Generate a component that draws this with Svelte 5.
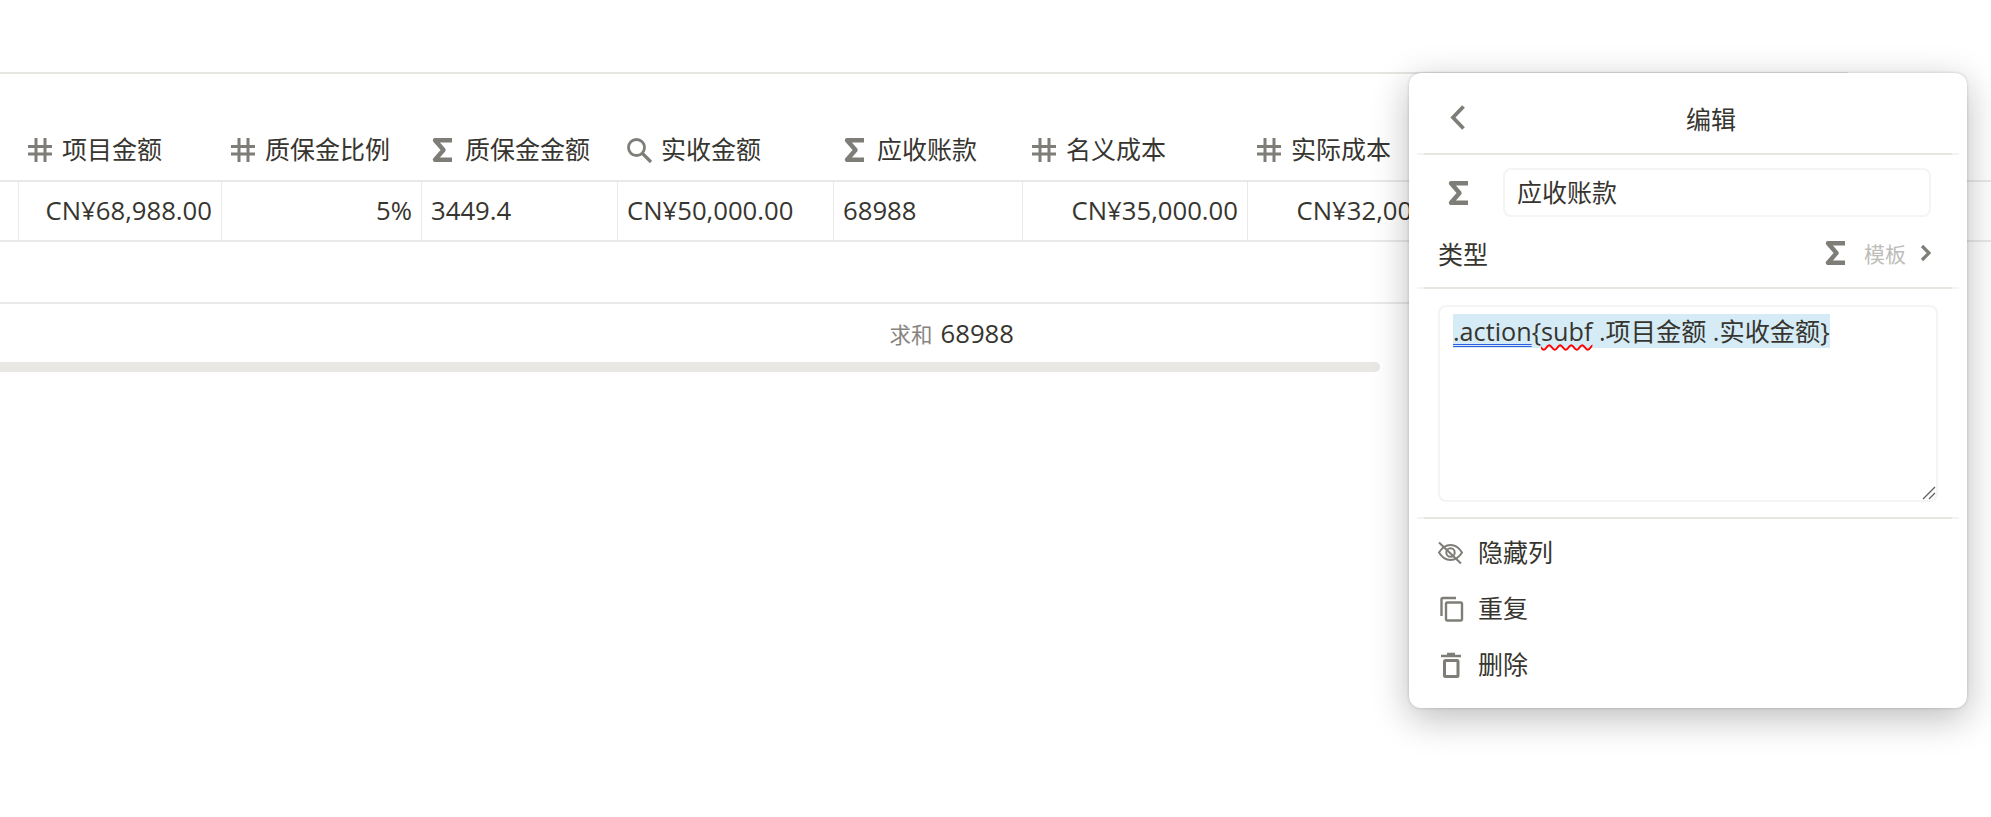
<script>
  const columns = [
    { width: 203, name: '项目金额', icon: 'number', value: 'CN¥68,988.00', align: 'right' },
    { width: 200, name: '质保金比例', icon: 'number', value: '5%', align: 'right' },
    { width: 196, name: '质保金金额', icon: 'formula', value: '3449.4', align: 'left' },
    { width: 216, name: '实收金额', icon: 'lookup', value: 'CN¥50,000.00', align: 'left' },
    { width: 189, name: '应收账款', icon: 'formula', value: '68988', align: 'left' },
    { width: 225, name: '名义成本', icon: 'number', value: 'CN¥35,000.00', align: 'right' },
    { width: 225, name: '实际成本', icon: 'number', value: 'CN¥32,000.00', align: 'right' }
  ];
</script>

{#snippet icon(type)}
  <svg class="icon" viewBox="0 0 24 24" fill="none" stroke="currentColor" aria-hidden="true">
    {#if type === 'number'}
      <path stroke-width="3" d="M8 0v24M17 0v24M0 8.500h24M0 16h24" />
    {:else if type === 'formula'}
      <path stroke-width="4.400" stroke-linejoin="round" d="M21 2.200H4L12.500 12 4 21.800h17" />
    {:else if type === 'lookup'}
      <circle stroke-width="2.800" cx="9.500" cy="9.500" r="8" />
      <path stroke-width="3.200" d="M15 15l9 9" />
    {/if}
  </svg>
{/snippet}

<div class="page">
  <div class="topline"></div>

  <div class="row head">
    <div class="stub"></div>
    {#each columns as col}
      <div class="th" style="width: {col.width}px">
        {@render icon(col.icon)}
        <span>{col.name}</span>
      </div>
    {/each}
  </div>

  <div class="row body">
    <div class="stub"></div>
    {#each columns as col}
      <div class="td" class:right={col.align === 'right'} style="width: {col.width}px">{col.value}</div>
    {/each}
  </div>

  <div class="sum">
    <span class="sum-label">求和</span>
    <span class="sum-value">68988</span>
  </div>

  <div class="scrollbar"></div>

  <aside class="panel">
    <header class="panel-head">
      <svg class="back" viewBox="0 0 15 25" fill="none" stroke="currentColor" aria-hidden="true">
        <path stroke-width="3.800" d="M13.500 1.500 3 12.500l10.500 11" />
      </svg>
      <div class="title">编辑</div>
    </header>
    <div class="divider"></div>

    <div class="name-row">
      <span class="name-icon">{@render icon('formula')}</span>
      <div class="name-input">应收账款</div>
    </div>

    <div class="type-row">
      <span>类型</span>
      <div class="type-value">
        {@render icon('formula')}
        <span class="type-name">模板</span>
        <svg class="forward" viewBox="0 0 11 18" fill="none" stroke="currentColor" aria-hidden="true">
          <path stroke-width="3.200" d="M2 2l7 7-7 7" />
        </svg>
      </div>
    </div>
    <div class="divider"></div>

    <div class="formula">
      <span class="selected"><span class="grammar">.action</span>{'{'}<span class="spell">subf</span> .项目金额 .实收金额{'}'}</span>
      <svg class="grip" viewBox="0 0 14 14" fill="none" stroke="#5f5f5f" stroke-width="1.300" aria-hidden="true">
        <path d="M1 13 13 1M7 13l6-6" />
      </svg>
    </div>
    <div class="divider"></div>

    <div class="menu">
      <div class="item">
        <svg class="menu-icon" viewBox="0 0 25 25" fill="none" stroke="currentColor" stroke-width="2" aria-hidden="true">
          <path d="M1 10.500c3-5 6.800-7.500 11.500-7.500S21 5.500 24 10.500c-3 5-6.800 7.500-11.500 7.500S4 15.500 1 10.500Z" />
          <circle cx="12.500" cy="10.500" r="4.200" />
          <path d="M1 .500l22 21" />
        </svg>
        隐藏列
      </div>
      <div class="item">
        <svg class="menu-icon" viewBox="0 0 25 25" fill="none" stroke="currentColor" stroke-width="2.400" aria-hidden="true">
          <path d="M3.500 18V1.500c0-1 .500-1.500 1.500-1.500h13" />
          <rect x="8" y="4.500" width="16" height="18" rx="1.500" />
        </svg>
        重复
      </div>
      <div class="item">
        <svg class="menu-icon" viewBox="0 0 25 25" fill="none" stroke="currentColor" stroke-width="3" aria-hidden="true">
          <path stroke-width="2.400" d="M3 2h20M9 0h8" />
          <rect x="6.500" y="6.500" width="13.500" height="16" rx="1" />
        </svg>
        删除
      </div>
    </div>
  </aside>
</div>

<style>
  :global(body) {
    margin: 0;
    background: #fff;
  }

  .page {
    position: relative;
    width: 1991px;
    height: 817px;
    overflow: hidden;
    color: #37352f;
    font-family: "Open Sans", "Noto Sans CJK SC", sans-serif;
    font-size: 25px;
  }

  .topline {
    width: 1848px;
    height: 2px;
    margin-top: 72px;
    background: #e6e5e2;
  }

  .row {
    display: flex;
    border-bottom: 2px solid #e9e9e7;
  }

  .stub {
    flex: 0 0 18px;
  }

  .head {
    height: 106px;
    align-items: flex-end;
  }

  .th {
    flex: none;
    box-sizing: border-box;
    display: flex;
    align-items: center;
    gap: 10px;
    height: 64px;
    padding: 3px 10px 0;
    line-height: 1;
  }

  .icon {
    flex: none;
    width: 24px;
    height: 24px;
    color: #7f7d77;
    overflow: visible;
  }

  .body {
    height: 58px;
  }

  .td {
    flex: none;
    box-sizing: border-box;
    height: 58px;
    padding: 0 9px;
    border-left: 1px solid #e9e9e7;
    font-size: 25.7px;
    line-height: 58px;
    white-space: nowrap;
  }

  .td.right {
    text-align: right;
  }

  .sum {
    display: flex;
    align-items: center;
    justify-content: flex-end;
    gap: 8px;
    box-sizing: border-box;
    width: 1409px;
    height: 60px;
    margin-top: 60px;
    padding-right: 395px;
    border-top: 2px solid #e9e9e7;
  }

  .sum-label {
    font-size: 21.500px;
    color: #87847f;
  }

  .sum-value {
    font-size: 25.700px;
  }

  .scrollbar {
    width: 1380px;
    height: 10px;
    border-radius: 0 5px 5px 0;
    background: #e8e7e3;
  }

  .panel {
    position: absolute;
    left: 1409px;
    top: 73px;
    width: 558px;
    height: 635px;
    display: flex;
    flex-direction: column;
    border-radius: 12px;
    background: #fff;
    box-shadow: 0 0 3px rgba(15, 15, 15, 0.2), 0 10px 36px rgba(15, 15, 15, 0.28);
  }

  .panel-head {
    box-sizing: border-box;
    flex: none;
    display: flex;
    align-items: center;
    height: 80px;
    padding: 12px 14px 0 41px;
  }

  .back {
    width: 15px;
    height: 25px;
    margin-bottom: 3px;
    color: #7f7d77;
  }

  .title {
    flex: 1;
    padding-left: 4px;
    text-align: center;
    line-height: 1;
  }

  .divider {
    flex: none;
    height: 2px;
    margin: 0 8px;
    background: linear-gradient(to right, #f3f3f1 7px, #e6e5e0 7px, #e6e5e0 calc(100% - 7px), #f3f3f1 calc(100% - 7px));
  }

  .name-row {
    display: flex;
    align-items: center;
    margin-top: 13px;
    padding-left: 38px;
  }

  .name-icon {
    display: flex;
    width: 56px;
  }

  .name-input {
    box-sizing: border-box;
    width: 428px;
    height: 49px;
    padding: 0 12px;
    border: 2px solid #f4f4f3;
    border-radius: 8px;
    line-height: 45px;
  }

  .type-row {
    box-sizing: border-box;
    display: flex;
    align-items: center;
    justify-content: space-between;
    height: 70px;
    padding: 1px 36px 0 29px;
  }

  .type-value {
    display: flex;
    align-items: center;
  }

  .type-name {
    margin: 0 14px 0 16px;
    font-size: 21px;
    color: #bdbcb9;
  }

  .forward {
    width: 11px;
    height: 18px;
    color: #7f7d77;
  }

  .formula {
    position: relative;
    flex: none;
    box-sizing: border-box;
    width: 500px;
    height: 197px;
    margin: 16px 0 15px 29px;
    padding: 6px 13px;
    border: 2px solid #f4f4f3;
    border-radius: 8px;
    font-size: 25.200px;
    line-height: 36px;
  }

  .selected {
    background: #d5ecf6;
  }

  .grammar {
    text-decoration: underline double #2f5fe0 1px;
    text-underline-offset: 3px;
  }

  .spell {
    text-decoration: underline wavy #f00 1.500px;
    text-underline-offset: 3px;
  }

  .grip {
    position: absolute;
    right: 0;
    bottom: 0;
    width: 14px;
    height: 14px;
  }

  .menu {
    padding-top: 4px;
  }

  .item {
    display: flex;
    align-items: center;
    gap: 15px;
    height: 56px;
    padding-left: 29px;
  }

  .menu-icon {
    flex: none;
    width: 25px;
    height: 25px;
    margin-top: 6px;
    color: #7f7d77;
    overflow: visible;
  }
</style>
